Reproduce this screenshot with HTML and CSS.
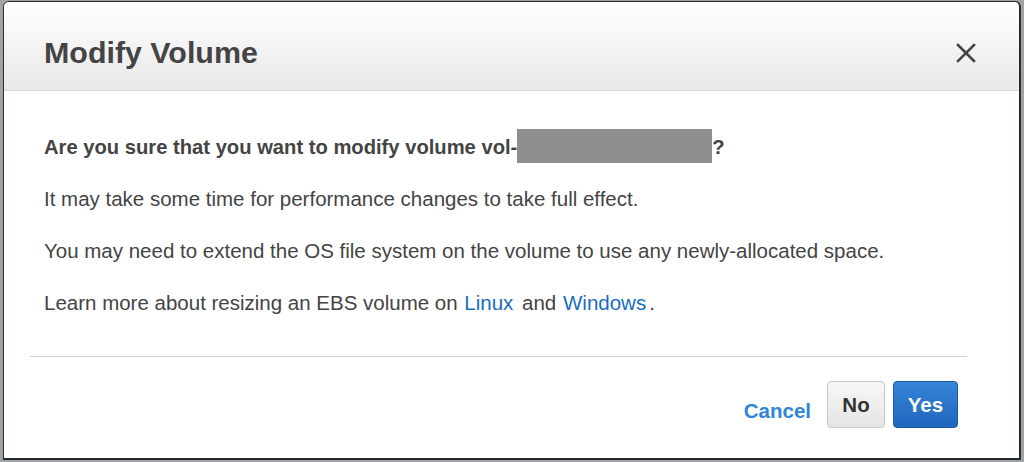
FILE: index.html
```html
<!DOCTYPE html>
<html>
<head>
<meta charset="utf-8">
<link rel="stylesheet" href="styles.css">
</head>
<body>
<div class="dialog">
  <div class="header">
    <h1 class="title">Modify Volume</h1>
    <span class="close">
      <svg width="20" height="20" viewBox="0 0 20 20"><path d="M2 2 L18 18 M18 2 L2 18" stroke="#444" stroke-width="2.6" stroke-linecap="square" fill="none"/></svg>
    </span>
  </div>
  <div class="content">
    <p class="q">Are you sure that you want to modify volume vol-<span class="redact"></span>?</p>
    <p>It may take some time for performance changes to take full effect.</p>
    <p>You may need to extend the OS file system on the volume to use any newly-allocated space.</p>
    <p>Learn more about resizing an EBS volume on <a href="#">Linux</a> and <a href="#">Windows</a>.</p>
  </div>
  <div class="footer">
    <a class="cancel" href="#">Cancel</a>
    <button class="btn no">No</button>
    <button class="btn yes">Yes</button>
  </div>
</div>
</body>
</html>
```
FILE: styles.css
```css
html, body { margin: 0; padding: 0; }
body {
  background: #9fa3a7;
  width: 1024px;
  height: 462px;
  overflow: hidden;
  font-family: "Liberation Sans", Arial, sans-serif;
  color: #444;
}
.dialog {
  box-sizing: border-box;
  margin: 1px 0 0 3px;
  width: 1018px;
  height: 459px;
  background: #fff;
  border: 1px solid #2a2a2a;
  border-right-width: 2px;
  border-bottom-width: 2px;
  border-radius: 6px 6px 0 0;
  display: flex;
  flex-direction: column;
}
.header {
  height: 89px;
  flex: none;
  box-sizing: border-box;
  border-bottom: 1px solid #d6d6d6;
  background: linear-gradient(#ffffff, #e9e9e9);
  border-radius: 5px 5px 0 0;
  display: flex;
  align-items: center;
  justify-content: space-between;
  padding: 13px 43px 0 40px;
}
.title {
  margin: 0;
  font-size: 30.4px;
  font-weight: bold;
  color: #444;
}
.close { display: flex; width: 20px; height: 20px; }
.content {
  padding: 38px 40px 0 40px;
  display: flex;
  flex-direction: column;
  gap: 28px;
  font-size: 20.5px;
  line-height: 24px;
}
.content p { margin: 0; }
.q { font-weight: bold; font-size: 20.2px; margin-bottom: -4px !important; }
.redact {
  display: inline-block;
  width: 195px;
  height: 34px;
  background: #8e8e8e;
  vertical-align: -9px;
}
.content a { color: #1a6bbf; text-decoration: none; margin: 0 3px 0 1px; }
.footer {
  margin: 41px 52px 0 26px;
  border-top: 1px solid #cfcfcf;
  display: flex;
  justify-content: flex-end;
  align-items: center;
  padding: 24px 9px 0 0;
  gap: 8px;
}
.cancel {
  color: #2f86d8;
  font-weight: bold;
  font-size: 20.5px;
  text-decoration: none;
  margin: 12px 8px 0 0;
}
.btn {
  font-family: "Liberation Sans", Arial, sans-serif;
  font-weight: bold;
  font-size: 20.5px;
  height: 47px;
  border-radius: 4px;
  padding: 0;
}
.no {
  width: 58px;
  color: #333;
  background: linear-gradient(#f8f8f8, #e4e4e4);
  border: 1px solid #c8c8c8;
}
.yes {
  width: 65px;
  color: #fff;
  background: linear-gradient(#3585d8, #1f66bd);
  border: 1px solid #1a5aa6;
}
```
